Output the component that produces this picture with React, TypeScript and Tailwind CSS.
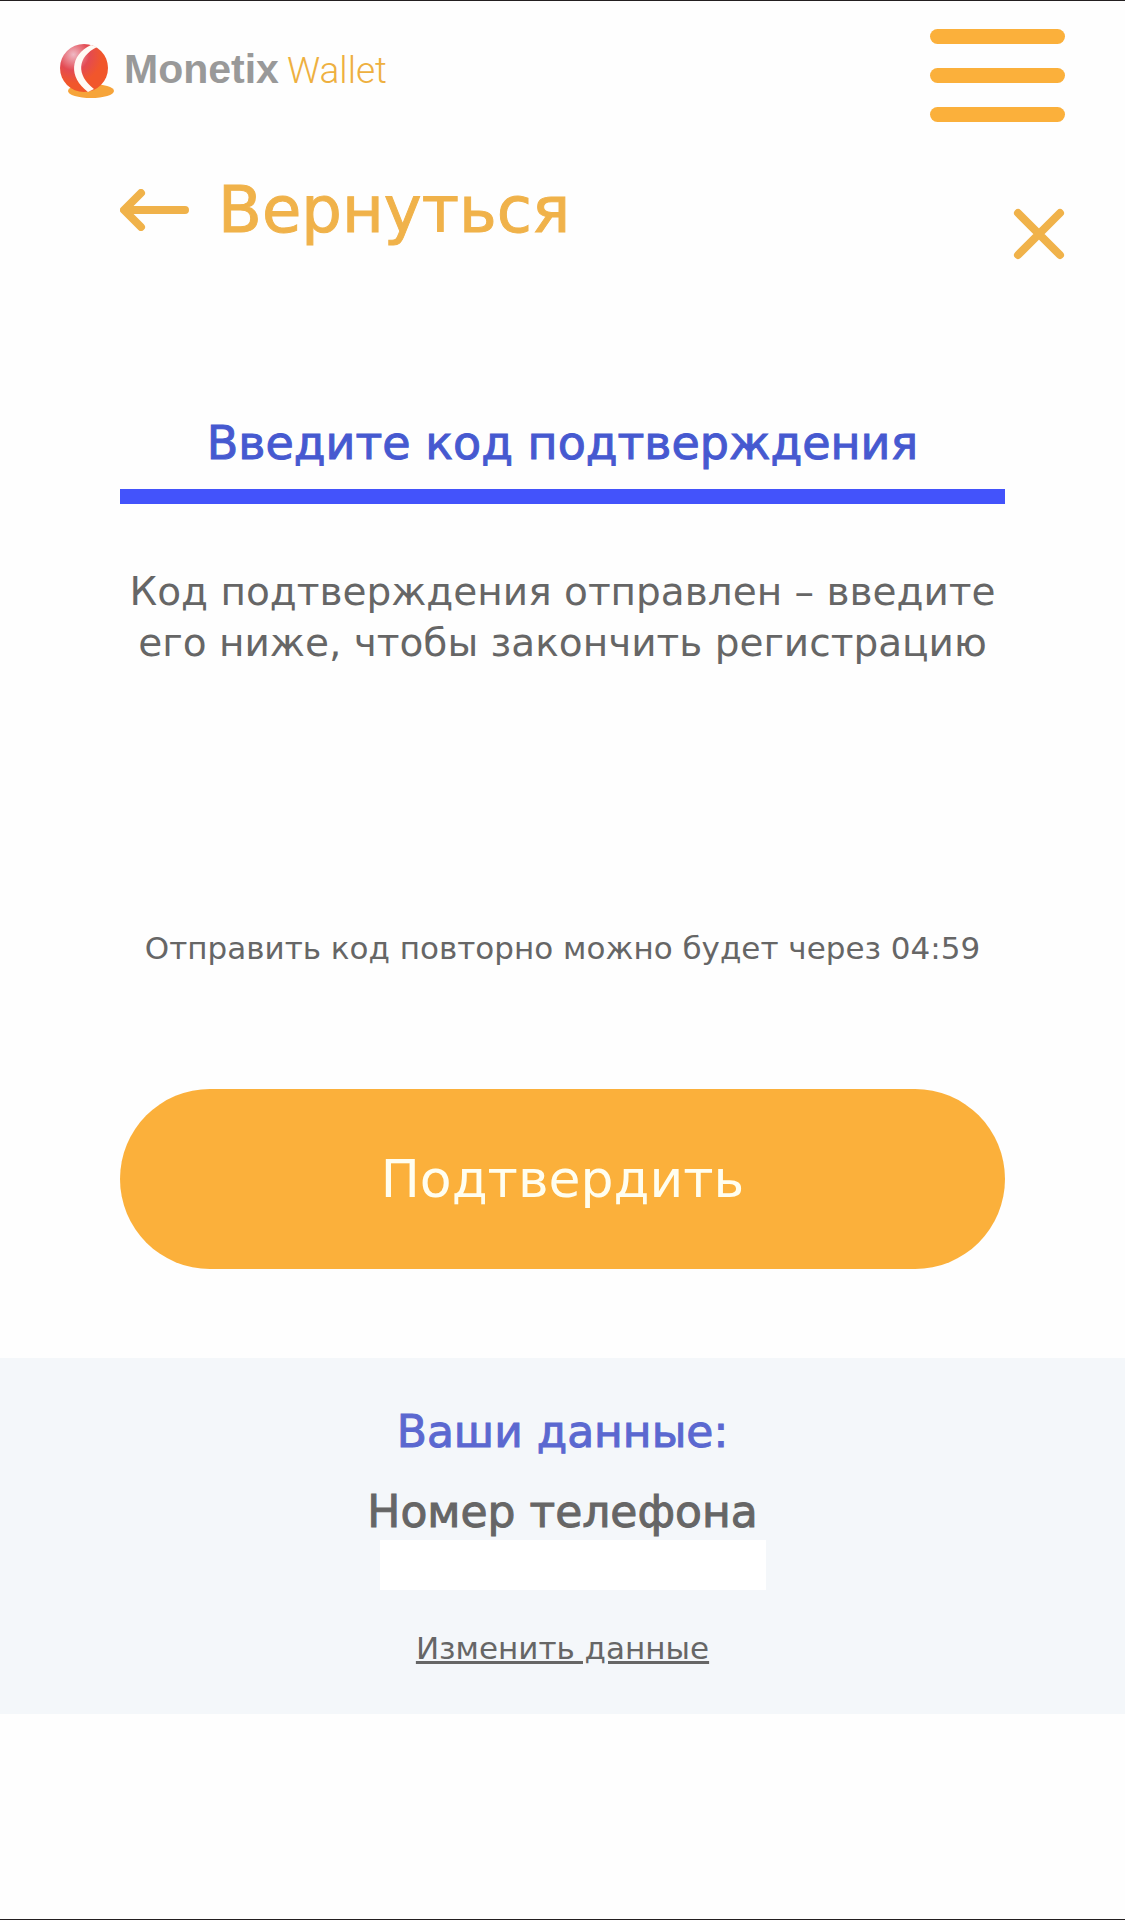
import React from "react";

function Logo() {
  return (
    <a href="#" className="flex items-center gap-2 leading-none">
      <svg className="h-14 w-14 shrink-0" viewBox="0 0 56 56" aria-hidden="true">
        <defs>
          <radialGradient id="ball" cx="0.28" cy="0.22" r="0.6">
            <stop offset="0" stopColor="#efb9c4" />
            <stop offset="0.55" stopColor="#e34a52" />
            <stop offset="1" stopColor="#f1562b" />
          </radialGradient>
        </defs>
        <ellipse cx="31" cy="48" rx="23" ry="7" fill="#f6a43a" />
        <circle cx="24" cy="25" r="24" fill="url(#ball)" />
        <path d="M31 2C10 12 8 34 28 49L34 46C16 32 17 14 37 4Z" fill="#fffaf5" />
      </svg>
      <span className="flex items-baseline gap-2 whitespace-nowrap pb-1">
        <span className="font-['Liberation_Sans',sans-serif] text-[41px] font-bold text-[#999999]">Monetix</span>
        <span className="font-['Roboto',sans-serif] text-[37px] font-light text-[#eeb040]">Wallet</span>
      </span>
    </a>
  );
}

function MenuButton() {
  return (
    <button type="button" aria-label="Меню" className="flex w-[135px] flex-col gap-6 text-[#fbb03b]">
      <span className="h-[15px] w-full rounded-full bg-current" />
      <span className="h-[15px] w-full rounded-full bg-current" />
      <span className="h-[15px] w-full rounded-full bg-current" />
    </button>
  );
}

export default function App() {
  return (
    <div className="flex min-h-screen flex-col border-y border-[#231f20] bg-[#fefefe] font-['DejaVu_Sans','Noto_Sans',sans-serif] text-[#666666]">
      <header className="flex items-start justify-between px-[60px] pt-7">
        <div className="pt-[14px]">
          <Logo />
        </div>
        <MenuButton />
      </header>

      <nav className="flex items-start justify-between pt-[50px] pr-[60px] pl-[120px] text-[#f0b24a]">
        <a href="#" className="flex items-center gap-7 text-[64px] leading-[76px] [-webkit-text-stroke:1px]">
          <svg className="h-[42px] w-[70px]" viewBox="0 0 70 42" fill="none" stroke="currentColor" strokeWidth="8" strokeLinecap="round" strokeLinejoin="round" aria-hidden="true">
            <path d="M65 21H5M21 4L4 21L21 38" />
          </svg>
          Вернуться
        </a>
        <button type="button" aria-label="Закрыть" className="mt-9">
          <svg className="h-[52px] w-[52px]" viewBox="0 0 52 52" fill="none" stroke="currentColor" strokeWidth="8" strokeLinecap="round" aria-hidden="true">
            <path d="M5 5L47 47M47 5L5 47" />
          </svg>
        </button>
      </nav>

      <main className="px-[120px] text-center">
        <h1 className="mt-[153px] border-b-[15px] border-[#4353fb] pb-4 text-[46px] leading-[60px] text-[#4659d0] [-webkit-text-stroke:1px]">
          Введите код подтверждения
        </h1>
        <p className="mt-[62px] text-[39px] leading-[51px]">
          Код подтверждения отправлен – введите его ниже, чтобы закончить регистрацию
        </p>
        <p className="mt-64 text-[31px] leading-[48px]">
          Отправить код повторно можно будет через 04:59
        </p>
        <button type="button" className="mt-[117px] h-[180px] w-full rounded-full bg-[#fbb03b] text-[52px] text-[#fffef0]">
          Подтвердить
        </button>
      </main>

      <section className="mt-[89px] flex flex-col items-center bg-[#f4f7fa] pt-[46px] pb-[42px] text-center">
        <h2 className="text-[44px] leading-[56px] text-[#5b68d0] [-webkit-text-stroke:1px]">Ваши данные:</h2>
        <label htmlFor="phone" className="mt-6 text-[44px] leading-[56px] [-webkit-text-stroke:1px]">
          Номер телефона
        </label>
        <input id="phone" type="tel" className="ml-5 h-[50px] w-[386px] bg-white px-4 text-[31px]" />
        <a href="#" className="mt-[34px] text-[31px] leading-[48px] underline">
          Изменить данные
        </a>
      </section>
    </div>
  );
}
